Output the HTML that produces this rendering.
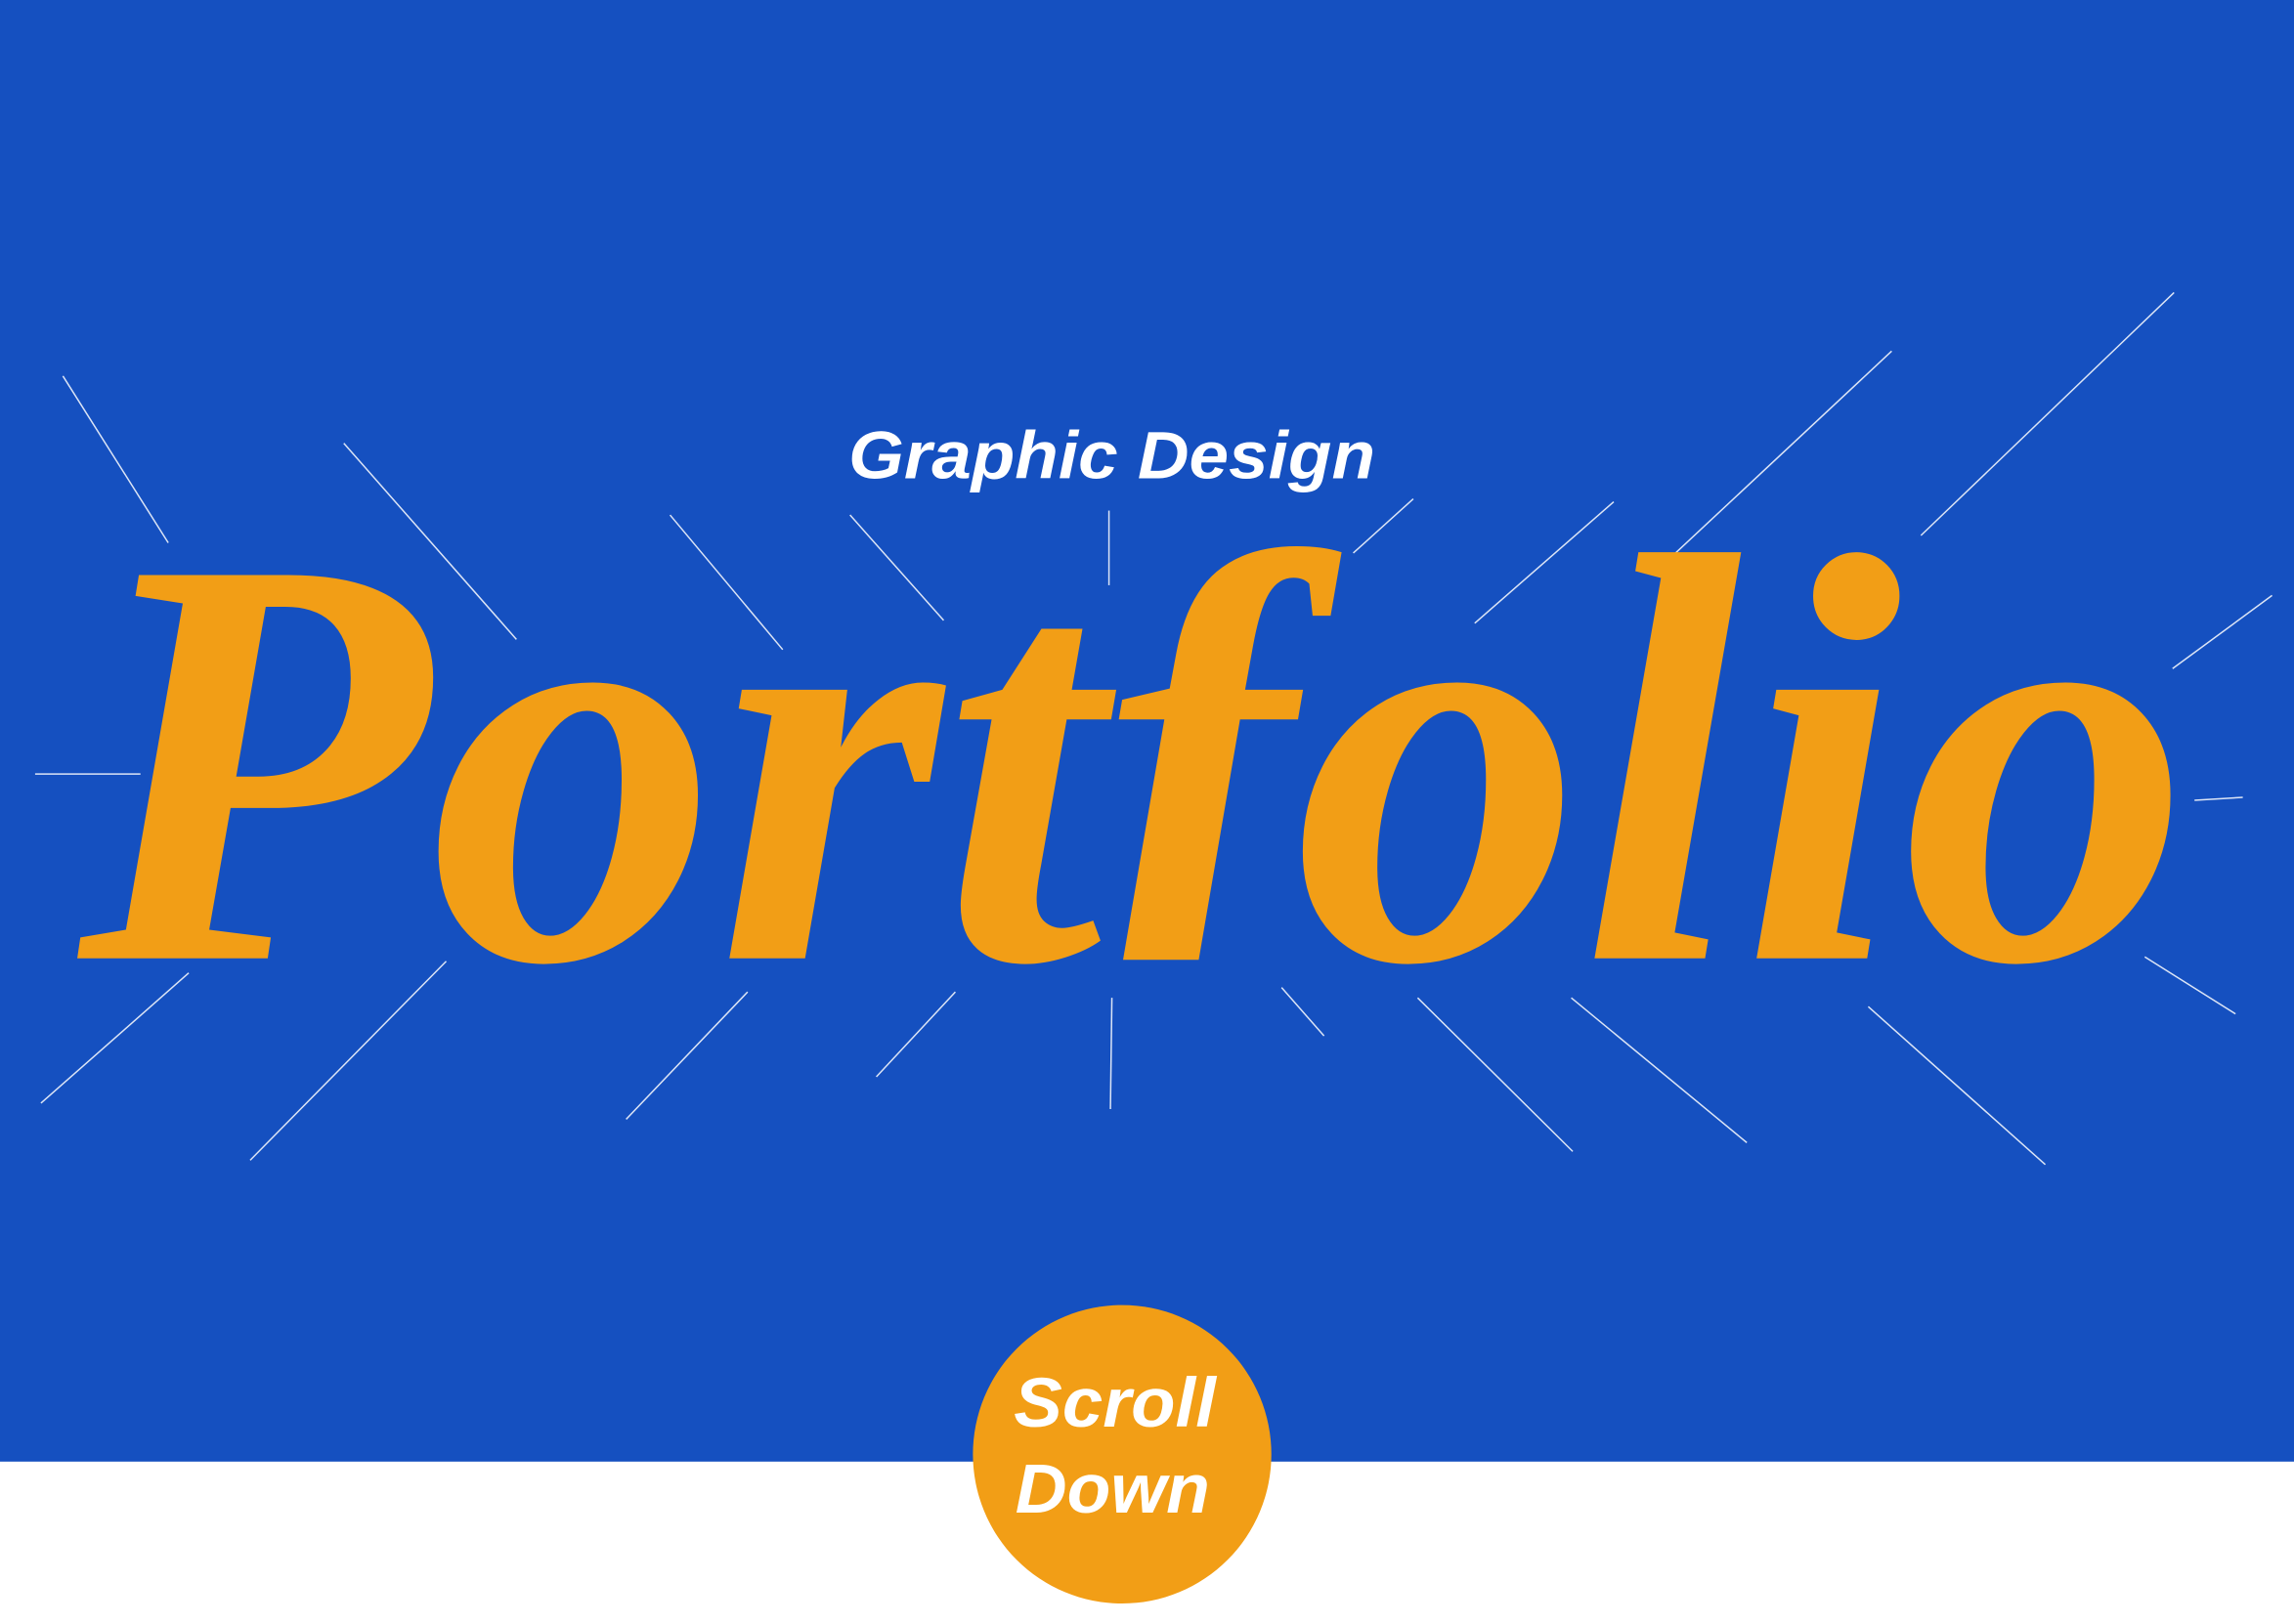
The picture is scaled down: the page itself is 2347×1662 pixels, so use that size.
<!DOCTYPE html>
<html>
<head>
<meta charset="utf-8">
<style>
html,body{margin:0;padding:0;background:#fff;}
svg{display:block;}
</style>
</head>
<body>
<svg width="2347" height="1662" viewBox="0 0 1568 1110" preserveAspectRatio="none" xmlns="http://www.w3.org/2000/svg">
<defs>
<clipPath id="c"><rect x="0" y="0" width="760" height="662"/><rect x="760" y="0" width="60" height="656"/><rect x="820" y="0" width="748" height="662"/></clipPath>
</defs>
<rect x="0" y="0" width="1568" height="999" fill="#1550C0"/>
<g stroke="#ffffff" stroke-width="1" fill="none" opacity="0.85">
<line x1="43" y1="257" x2="115" y2="371"/>
<line x1="235" y1="303" x2="353" y2="437"/>
<line x1="458" y1="352" x2="535" y2="444"/>
<line x1="581" y1="352" x2="645" y2="424"/>
<line x1="758" y1="349" x2="758" y2="400"/>
<line x1="925" y1="378" x2="966" y2="341"/>
<line x1="1008" y1="426" x2="1103" y2="343"/>
<line x1="1141" y1="382" x2="1293" y2="240"/>
<line x1="1313" y1="366" x2="1486" y2="200"/>
<line x1="1485" y1="457" x2="1553" y2="407"/>
<line x1="24" y1="529" x2="96" y2="529"/>
<line x1="1500" y1="547" x2="1533" y2="545"/>
<line x1="28" y1="754" x2="129" y2="665"/>
<line x1="171" y1="793" x2="305" y2="657"/>
<line x1="428" y1="765" x2="511" y2="678"/>
<line x1="599" y1="736" x2="653" y2="678"/>
<line x1="760" y1="682" x2="759" y2="758"/>
<line x1="876" y1="675" x2="905" y2="708"/>
<line x1="969" y1="682" x2="1075" y2="787"/>
<line x1="1074" y1="682" x2="1194" y2="781"/>
<line x1="1277" y1="688" x2="1398" y2="796"/>
<line x1="1466" y1="654" x2="1528" y2="693"/>
</g>
<text x="580" y="327" font-family="Liberation Sans, sans-serif" font-weight="bold" font-style="italic" font-size="46" fill="#ffffff" textLength="360" lengthAdjust="spacingAndGlyphs">Graphic Design</text>
<g clip-path="url(#c)">
<text x="53" y="655" font-family="Liberation Serif, serif" font-weight="bold" font-style="italic" font-size="400" fill="#F29E16" textLength="1444" lengthAdjust="spacingAndGlyphs">Portfolio</text>
</g>
<circle cx="767" cy="994" r="102" fill="#F29E16"/>
<text x="693" y="975" font-family="Liberation Sans, sans-serif" font-weight="bold" font-style="italic" font-size="48" fill="#ffffff" textLength="138" lengthAdjust="spacingAndGlyphs">Scroll</text>
<text x="694" y="1034" font-family="Liberation Sans, sans-serif" font-weight="bold" font-style="italic" font-size="48" fill="#ffffff" textLength="133" lengthAdjust="spacingAndGlyphs">Down</text>
</svg>
</body>
</html>
